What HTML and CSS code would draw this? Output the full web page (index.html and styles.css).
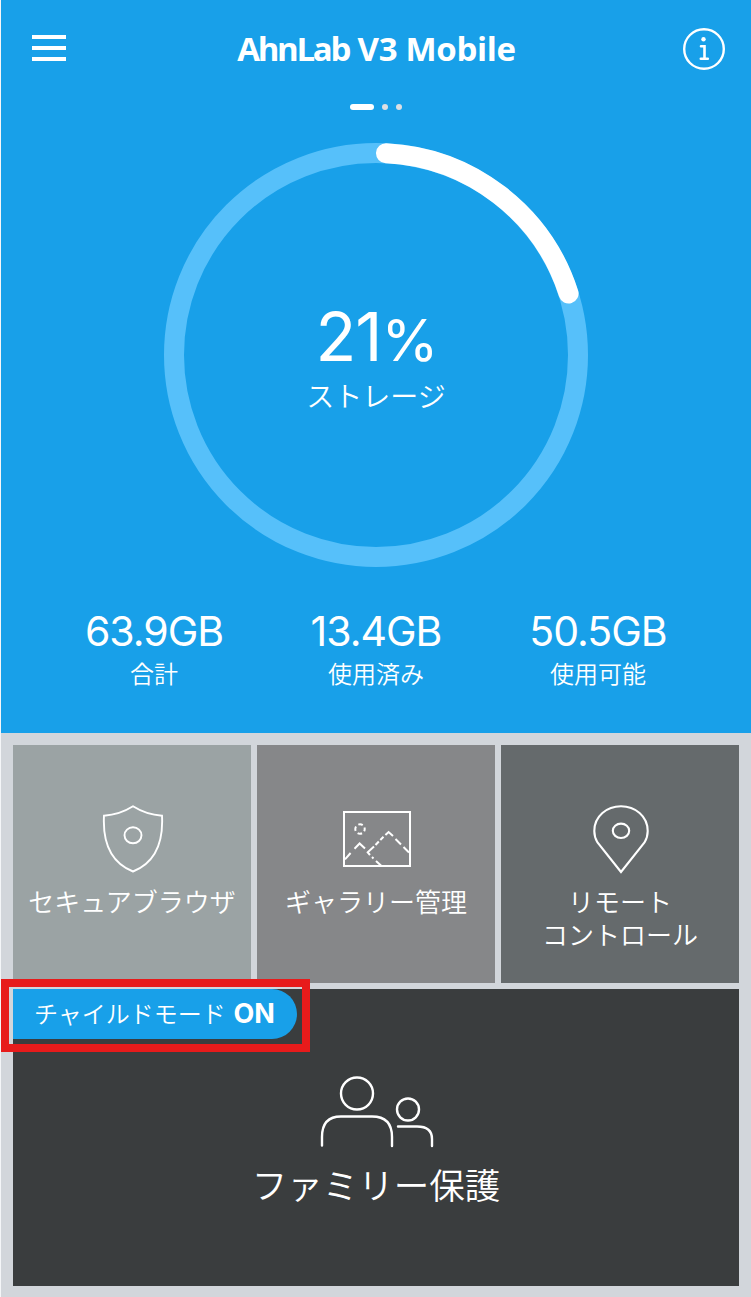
FILE: index.html
```
<!DOCTYPE html>
<html lang="ja">
<head>
    <meta charset="UTF-8">
    <meta name="viewport" content="width=device-width, initial-scale=1.0">
    <title>AhnLab V3 Mobile</title>
    <link rel="stylesheet" href="styles.css">
</head>
<body>
    <div class="app">
        <section class="hero">
            <header class="header">
                <button class="menu-btn" aria-label="メニュー">
                    <span></span>
                    <span></span>
                    <span></span>
                </button>
                <h1 class="title"><span class="brand">AhnLab</span> <span class="product">V3 Mobile</span></h1>
                <button class="info-btn" aria-label="情報">
                    <svg width="42" height="42" viewBox="0 0 42 42" fill="none" stroke="#fff">
                        <circle cx="21" cy="21" r="19.8" stroke-width="2.4"/>
                        <circle cx="20.5" cy="11.3" r="2.2" fill="#fff" stroke="none"/>
                        <path d="M18 18.2h3.5V30.8M17.8 30.8h7" stroke-width="2.6" stroke-linecap="round"/>
                    </svg>
                </button>
            </header>

            <div class="dots">
                <span class="dot active"></span>
                <span class="dot"></span>
                <span class="dot"></span>
            </div>

            <div class="ring">
                <svg class="ring-svg" width="424" height="424" viewBox="0 0 424 424" fill="none" stroke-width="20">
                    <circle cx="212" cy="212" r="202" stroke="#56c0fa"/>
                    <path d="M222 10.2A202 202 0 0 1 404.6 150.5" stroke="#fff" stroke-linecap="round"/>
                </svg>
                <div class="ring-text">
                    <p class="percent">21<span>%</span></p>
                    <p class="ring-label">ストレージ</p>
                </div>
            </div>

            <div class="stats">
                <div class="stat">
                    <p class="stat-value">63.9GB</p>
                    <p class="stat-label">合計</p>
                </div>
                <div class="stat">
                    <p class="stat-value">13.4GB</p>
                    <p class="stat-label">使用済み</p>
                </div>
                <div class="stat">
                    <p class="stat-value">50.5GB</p>
                    <p class="stat-label">使用可能</p>
                </div>
            </div>
        </section>

        <section class="tiles">
            <div class="tile browser">
                <svg width="62" height="68" viewBox="0 0 62 68" fill="none" stroke="#fff" stroke-width="1.9">
                    <path d="M31 1.3C40 7 49 10 60 10.7C61.5 39 52 58 31 66.5C10 58 .5 39 2 10.7C13 10 22 7 31 1.3Z"/>
                    <ellipse cx="31" cy="30.3" rx="8.5" ry="8"/>
                </svg>
                <p>セキュアブラウザ</p>
            </div>
            <div class="tile gallery">
                <svg width="68" height="68" viewBox="0 0 68 68" fill="none" stroke="#fff" stroke-width="2">
                    <rect x="1" y="7" width="66" height="54"/>
                    <circle cx="17" cy="24" r="4.7" stroke-dasharray="4.6 2.78" stroke-dashoffset="2.3"/>
                    <path d="M2 54.3L7.600 48M11.500 43.700L16.600 38.500L22 43.500M31 41.500L24.700 47.300L27 50M29 52L30.500 53.500M33 56L38.500 61M32.500 40L35.800 36.500M37.300 35L40.500 31.700M42.400 30L45.600 27L50 31M52.500 34L58 39.500M60.500 42L66 47.500"/>
                </svg>
                <p>ギャラリー管理</p>
            </div>
            <div class="tile remote">
                <svg width="58" height="70" viewBox="0 0 58 70" fill="none" stroke="#fff" stroke-width="2.1">
                    <path d="M29 67L5.500 37.500C3 33.500 2.300 30 2.300 26C2.300 11 15 1.200 29 1.200S55.700 11 55.700 26C55.700 30 55 33.500 52.500 37.500Z"/>
                    <ellipse cx="29" cy="25.8" rx="8.2" ry="7.2"/>
                </svg>
                <p>リモート<br>コントロール</p>
            </div>
            <div class="tile family">
                <svg width="114" height="74" viewBox="0 0 114 74" fill="none" stroke="#fff" stroke-width="2.4" stroke-linecap="round">
                    <circle cx="37" cy="18.5" r="16"/>
                    <path d="M2 70.5V62C2 48 9 41.5 21 41.5H52C65 41.5 72 48 72 62V71"/>
                    <circle cx="88" cy="34.5" r="11"/>
                    <path d="M78 51.5H97C107 51.5 112 56 112 64V71"/>
                </svg>
                <p>ファミリー保護</p>
                <div class="mode-badge">チャイルドモード <b>ON</b></div>
                <div class="highlight"></div>
            </div>
        </section>
    </div>
</body>
</html>
```
FILE: styles.css
```
* {
    box-sizing: border-box;
}
body {
    margin: 0;
    background-color: #f4f6f8;
    color: #fff;
    font-family: Inter, "Noto Sans CJK JP", sans-serif;
}
p, h1 {
    margin: 0;
}
button {
    padding: 0;
    border: none;
    background: none;
}
svg {
    display: block;
}
.app {
    width: 750px;
    height: 1297px;
    margin-left: 1px;
    background-color: #d2d6db;
}
.hero {
    height: 733px;
    background-color: #18a0e9;
}

/* header */
.header {
    display: flex;
    justify-content: space-between;
    align-items: center;
    height: 98px;
    padding: 0 26px 0 31px;
}
.menu-btn {
    display: flex;
    flex-direction: column;
    gap: 7px;
    width: 38px;
    margin-bottom: 2px;
}
.menu-btn span {
    width: 34px;
    height: 4px;
    background-color: #fff;
}
.title {
    font-family: "Open Sans", "Noto Sans", sans-serif;
    font-size: 33px;
    font-weight: 700;
    line-height: 40px;
    white-space: nowrap;
}
.brand {
    letter-spacing: -2.3px;
}
.product {
    letter-spacing: -0.3px;
}

/* page dots */
.dots {
    display: flex;
    justify-content: center;
    gap: 8px;
    height: 45px;
    padding-top: 6px;
}
.dot {
    width: 6px;
    height: 6px;
    border-radius: 3px;
    background-color: #dcdfe3;
}
.dot.active {
    width: 24px;
    background-color: #fff;
}

/* storage ring */
.ring {
    display: grid;
    width: 424px;
    height: 424px;
    margin: 0 auto;
}
.ring-svg, .ring-text {
    grid-area: 1 / 1;
}
.ring-text {
    padding-top: 154px;
    text-align: center;
}
.percent {
    font-size: 67px;
    font-weight: 400;
    line-height: 80px;
    letter-spacing: -1px;
}
.percent span {
    font-size: 58px;
    font-weight: 400;
    letter-spacing: -2px;
}
.ring-label {
    font-size: 28px;
    font-weight: 350;
    line-height: 34px;
}

/* numbers under the ring */
.stats {
    display: grid;
    grid-template-columns: repeat(3, 222px);
    padding: 40px 42px 0;
    text-align: center;
}
.stat-value {
    font-size: 41px;
    font-weight: 400;
    line-height: 49px;
    letter-spacing: -1px;
}
.stat-label {
    font-size: 24px;
    font-weight: 350;
    line-height: 38px;
}

/* tiles */
.tiles {
    display: grid;
    grid-template-columns: repeat(3, 238px);
    grid-template-rows: 238px 297px;
    gap: 6px;
    padding: 12px;
}
.tile {
    display: flex;
    flex-direction: column;
    align-items: center;
    padding-top: 60px;
    text-align: center;
    font-size: 26px;
    font-weight: 350;
    line-height: 33px;
    white-space: nowrap;
}
.tile svg {
    margin-left: 2px;
}
.tile p {
    margin-top: 13px;
}
.browser {
    background-color: #9ba3a4;
}
.gallery {
    background-color: #868789;
}
.remote {
    background-color: #656a6c;
}
.remote svg {
    margin-bottom: -2px;
}
.family {
    position: relative;
    grid-column: 1 / 4;
    padding-top: 86px;
    background-color: #3a3d3e;
    font-size: 35.5px;
    line-height: 44px;
}
.family p {
    margin-top: 16px;
}
.mode-badge {
    position: absolute;
    top: 0;
    left: 0;
    width: 284px;
    height: 50px;
    padding-left: 21px;
    border-radius: 0 25px 25px 0;
    background-color: #18a0e9;
    font-size: 24px;
    line-height: 50px;
    text-align: left;
}
.mode-badge b {
    margin-left: 1px;
    font-size: 27px;
    font-weight: 700;
}
.highlight {
    position: absolute;
    top: -10px;
    left: -12px;
    width: 309px;
    height: 73px;
    border: 8px solid #e71b1b;
}
```
